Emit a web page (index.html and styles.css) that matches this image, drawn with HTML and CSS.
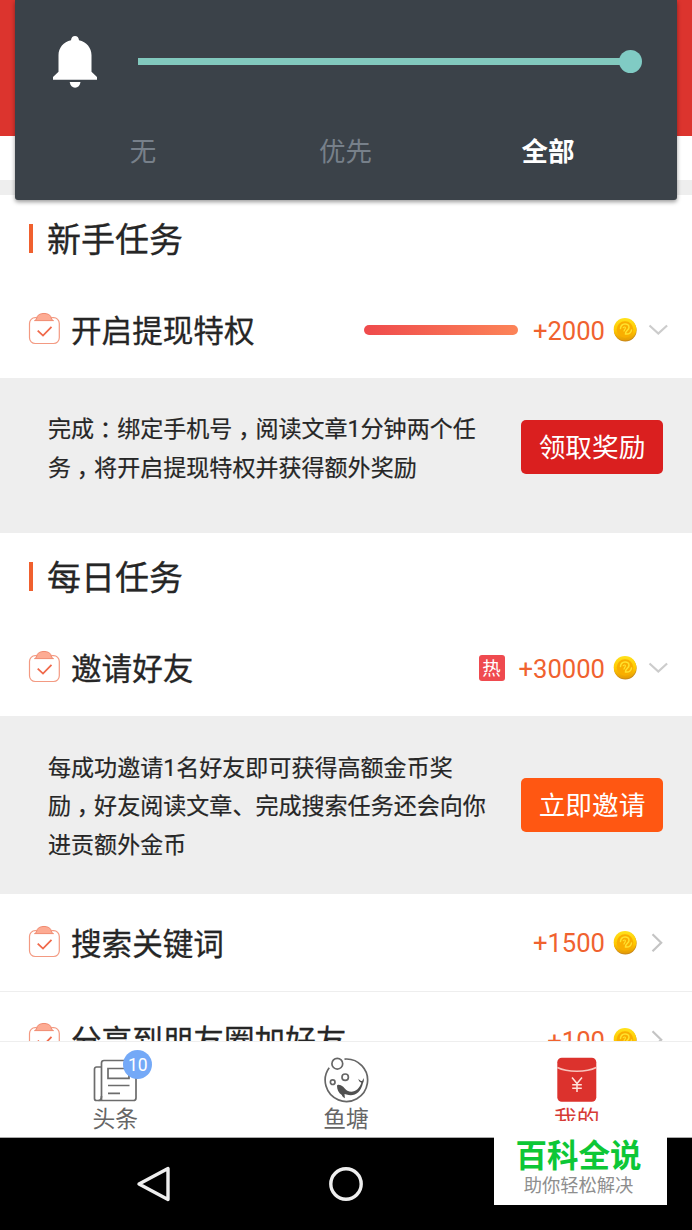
FILE: index.html
```html
<!DOCTYPE html>
<html lang="zh-CN">
<head>
<meta charset="utf-8">
<title>任务</title>
<link rel="stylesheet" href="styles.css">
</head>
<body>
<svg class="defs" width="0" height="0">
  <defs>
    <linearGradient id="gold" x1="0" y1="0" x2="0" y2="1">
      <stop offset="0" stop-color="#ffe21c"/><stop offset=".55" stop-color="#ffc800"/><stop offset="1" stop-color="#e59a05"/>
    </linearGradient>
    <symbol id="task" viewBox="0 0 32 34">
      <path d="M6.500 9.600C8.300 9.200 8.500 7.600 9.200 5.600 11 1.400 21 1.400 22.800 5.600c.7 2 .9 3.600 2.700 4z" fill="#fdab93" stroke="#f08a70"/>
      <path d="M9.300 6.700H7.200a5.700 5.700 0 0 0-5.700 5.700v14.400a5.700 5.700 0 0 0 5.700 5.700h18.400a5.700 5.700 0 0 0 5.700-5.700V12.400a5.700 5.700 0 0 0-5.700-5.700h-2.900" fill="none" stroke="#f39a82" stroke-width="1.200"/>
      <path d="M9.700 19.600l5.300 5 8.500-8.700" fill="none" stroke="#f0694a" stroke-width="1.800"/>
    </symbol>
    <symbol id="coin" viewBox="0 0 24 26">
      <circle cx="12.300" cy="13.300" r="11.300" fill="#c98a1a"/>
      <circle cx="12" cy="12.300" r="11.300" fill="url(#gold)"/>
      <circle cx="12" cy="12.500" r="8.300" fill="#f9ae00"/>
      <path d="M7.500 11.500c.3-5.800 8.500-6 8.500-1.300 0 3.300-4 3.600-3.500 6.800 3 .4 5.500-1 6-4" fill="none" stroke="#ffe22e" stroke-width="1.500" stroke-linecap="round"/>
      <path d="M10 11.200c.4-1.600 2.400-1.700 2.400-.2 0 1.400-1.500 2-1.500 3.600" fill="none" stroke="#ffe22e" stroke-width="1.100"/>
    </symbol>
    <symbol id="down" viewBox="0 0 20 20"><path d="M1.500 5.500l8.800 8 8.800-8" fill="none" stroke="#ccc" stroke-width="2.200"/></symbol>
    <symbol id="right" viewBox="0 0 20 20"><path d="M4.500 1.300l8.700 8.500-8.700 8.500" fill="none" stroke="#c4c4c4" stroke-width="2.200"/></symbol>
  </defs>
</svg>
<div class="phone">
  <main class="page">
    <header class="banner"></header>
    <div class="divider"></div>

    <h2 class="heading">新手任务</h2>
    <div class="row">
      <svg class="task"><use href="#task"/></svg>
      <span class="name">开启提现特权</span>
      <span class="progress"></span>
      <span class="points">+2000</span>
      <svg class="coin"><use href="#coin"/></svg>
      <svg class="arrow"><use href="#down"/></svg>
    </div>
    <section class="detail detail-tall">
      <p>完成<span class="mark">：</span>绑定手机号<span class="mark">，</span>阅读文章1分钟两个任<br>务<span class="mark">，</span>将开启提现特权并获得额外奖励</p>
      <button class="btn btn-red">领取奖励</button>
    </section>

    <h2 class="heading">每日任务</h2>
    <div class="row">
      <svg class="task"><use href="#task"/></svg>
      <span class="name">邀请好友</span>
      <span class="hot">热</span>
      <span class="points">+30000</span>
      <svg class="coin"><use href="#coin"/></svg>
      <svg class="arrow"><use href="#down"/></svg>
    </div>
    <section class="detail">
      <p>每成功邀请1名好友即可获得高额金币奖<br>励<span class="mark">，</span>好友阅读文章、完成搜索任务还会向你<br>进贡额外金币</p>
      <button class="btn btn-orange">立即邀请</button>
    </section>
    <div class="row row-line">
      <svg class="task"><use href="#task"/></svg>
      <span class="name">搜索关键词</span>
      <span class="points">+1500</span>
      <svg class="coin"><use href="#coin"/></svg>
      <svg class="arrow"><use href="#right"/></svg>
    </div>
    <div class="row">
      <svg class="task"><use href="#task"/></svg>
      <span class="name">分享到朋友圈加好友</span>
      <span class="points">+100</span>
      <svg class="coin"><use href="#coin"/></svg>
      <svg class="arrow"><use href="#right"/></svg>
    </div>
  </main>

  <nav class="tabs">
    <div class="tab">
      <div class="tab-icon">
        <svg width="46" height="46" viewBox="0 0 46 46" fill="none" stroke="#6c6c6c" stroke-width="1.700">
          <path d="M9.500 43.500V6A2.500 2.500 0 0 1 12 3.500h29.500A2.500 2.500 0 0 1 44 6v35a2.500 2.500 0 0 1-2.500 2.500H4.500a2 2 0 0 1-2-2V12a2 2 0 0 1 2-2h5"/>
          <path d="M9.500 39c0 3-1 4.500-3 4.500M16 11.500h21v9.800H16zM16 28.500h21.500M16 36.300h12"/>
        </svg>
        <span class="count">10</span>
      </div>
      <span>头条</span>
    </div>
    <div class="tab">
      <div class="tab-icon">
        <svg width="46" height="46" viewBox="0 0 46 46" fill="none" stroke="#666" stroke-width="1.700">
          <path d="M21.500 2.100A21.200 21.200 0 1 1 6.200 10.800"/>
          <circle cx="14.300" cy="6.700" r="5.400"/><circle cx="22.200" cy="20.200" r="3.200"/><circle cx="9.700" cy="25.200" r="2.300"/>
          <path d="M14 29c0-2 3.500-1.800 6.200.8 1.600 1.600 2.600 3 4.200 4 6 3 12-1.500 14-8-2-.8-2.800-2-3-4 1.300 1.700 2.400 2.300 3.600 2.300.8-.8 1.100-1.600 1.200-3 1 1.700.8 3.300-.2 4.900C37.700 36 31 40 23.500 37.500l-2-.4.4 4.100c-1.800-.8-2.700-1.800-3.100-3.100C15.500 36 14 32.500 14 29z" fill="#505050" stroke="none"/>
        </svg>
      </div>
      <span>鱼塘</span>
    </div>
    <div class="tab tab-on">
      <div class="tab-icon">
        <svg width="46" height="46" viewBox="0 0 46 46">
          <rect x="3.300" y=".8" width="39" height="44" rx="4.500" fill="#dc322d"/>
          <path d="M3.300 10.500c10 5 29 5 39 0" fill="none" stroke="#f8c4bd" stroke-width="1.500"/>
          <path d="M18 20.500l5 6 5-6M23 26.500V35M18.200 27.700h9.600M18.200 31.300h9.600" fill="none" stroke="#ffe3dc" stroke-width="1.500"/>
        </svg>
      </div>
      <span>我的</span>
    </div>
  </nav>

  <div class="system">
    <svg width="36" height="40" viewBox="0 0 36 40"><path d="M32 4.500v31L3 20z" fill="none" stroke="#eee" stroke-width="3.400" stroke-linejoin="round"/></svg>
    <svg width="36" height="40" viewBox="0 0 36 40"><circle cx="18" cy="20" r="15.200" fill="none" stroke="#eee" stroke-width="3.400"/></svg>
    <span></span>
  </div>

  <aside class="volume">
    <div class="slider">
      <svg width="46" height="54" viewBox="0 0 46 54" fill="#fff">
        <path d="M23 1c2.200 0 3.800 1.500 4 4.200 7.500 1.700 12.500 7.500 12.500 15v16.500l5.500 5.300v2.700H1V42l5.500-5.300V20.200c0-7.500 5-13.300 12.500-15C19.200 2.500 20.800 1 23 1z"/>
        <path d="M17.700 47h10.800c-.5 3.600-2.600 5.700-5.400 5.700s-4.900-2.100-5.400-5.700z"/>
      </svg>
      <div class="track"><i></i></div>
    </div>
    <div class="modes"><span>无</span><span>优先</span><b>全部</b></div>
  </aside>

  <aside class="watermark">
    <strong>百科全说</strong>
    <span>助你轻松解决</span>
  </aside>
</div>
</body>
</html>
```

FILE: styles.css
```css
* { box-sizing: border-box; }
body {
  margin: 0;
  color: #262626;
  font-family: Roboto, "Noto Sans CJK SC", sans-serif;
}
.defs { position: absolute; }
.phone {
  position: relative;
  display: flex;
  flex-direction: column;
  width: 692px;
  height: 1230px;
  overflow: hidden;
  background: #fff;
}
.page { height: 1041px; flex: none; overflow: hidden; }
.banner { height: 136px; background: #dc342e; }
.divider { height: 15px; margin-top: 44px; background: #eee; }

.heading {
  display: flex;
  align-items: center;
  gap: 14px;
  height: 87px;
  margin: 0;
  padding: 3px 0 0 29px;
  font-size: 34px;
  font-weight: 400;
  line-height: 40px;
  -webkit-text-stroke: .3px;
}
.heading::before { content: ""; width: 4px; height: 29px; margin-bottom: 3px; background: #f0602e; }

.row {
  display: flex;
  align-items: center;
  height: 96px;
  padding: 0 24px 0 28px;
}
.row-line { height: 98px; border-bottom: 1px solid #eee; }
.task { width: 32px; height: 34px; margin-right: 11px; margin-top: -4px; }
.name {
  margin-right: auto;
  padding-top: 4px;
  font-size: 30.6px;
  line-height: 40px;
  -webkit-text-stroke: .3px;
}
.progress {
  width: 154px;
  height: 10px;
  margin-right: 15px;
  border-radius: 5px;
  background: linear-gradient(90deg, #ef4a4c, #fc8458);
}
.hot {
  width: 26px;
  height: 26px;
  margin-right: 14px;
  border-radius: 3px;
  background: #ef4a4f;
  color: #fff;
  font-size: 18.5px;
  line-height: 28px;
  text-align: center;
}
.points { padding-top: 1px; color: #f0622f; font-size: 25.6px; line-height: 30px; }
.coin { width: 24px; height: 26px; margin: 0 11px 0 8px; }
.arrow { width: 20px; height: 20px; }

.detail {
  display: flex;
  align-items: center;
  justify-content: space-between;
  height: 178px;
  padding: 0 29px 0 48px;
  background: #eee;
}
.detail-tall { height: 155px; padding-bottom: 17px; }
.detail p {
  margin: 0;
  padding-top: 5px;
  font-size: 23.05px;
  line-height: 38.4px;
  white-space: nowrap;
  -webkit-text-stroke: .2px;
}
.mark { padding: 0 .25em; font-feature-settings: "halt"; }
.btn {
  width: 142px;
  height: 54px;
  padding: 3px 0 0;
  border: 0;
  border-radius: 5px;
  color: #fff;
  font: 26.7px/51px Roboto, "Noto Sans CJK SC", sans-serif;
}
.btn-red { background: #da1f1f; }
.btn-orange { background: #ff5712; }

.tabs {
  display: flex;
  flex: none;
  height: 97px;
  padding-top: 15px;
  border-top: 1px solid #eee;
  border-bottom: 1px solid #aaa;
  color: #666;
  font-size: 22.8px;
  line-height: 34px;
}
.tab { display: flex; flex: 1; flex-direction: column; align-items: center; }
.tab-icon { position: relative; height: 46px; }
.tab-icon svg { display: block; }
.tab-on { color: #d63a35; }
.count {
  position: absolute;
  top: -7px;
  left: 31px;
  width: 29px;
  height: 29px;
  border-radius: 50%;
  background: #74a9f7;
  color: #fff;
  font-size: 17.5px;
  line-height: 30px;
  text-align: center;
}

.system {
  display: grid;
  grid-template-columns: repeat(3, 192px);
  flex: 1;
  justify-content: center;
  justify-items: center;
  align-items: center;
  background: #000;
}

.volume {
  position: absolute;
  top: 0;
  left: 15px;
  width: 662px;
  height: 200px;
  border-radius: 0 0 3px 3px;
  background: #3b4249;
  box-shadow: 0 2px 4px rgba(0, 0, 0, .4);
}
.slider {
  display: flex;
  align-items: center;
  gap: 40px;
  height: 123px;
  padding: 0 35px 0 37px;
}
.track {
  display: flex;
  flex: 1;
  align-items: center;
  justify-content: flex-end;
  height: 7px;
  background: linear-gradient(90deg, #82c9be 97%, transparent 97%);
}
.track i { width: 23px; height: 23px; border-radius: 50%; background: #80cbc4; }
.modes {
  display: grid;
  grid-template-columns: repeat(3, 202.500px);
  justify-content: center;
  padding: 9px 1px 0 0;
  color: #77808a;
  font-size: 26.5px;
  line-height: 40px;
  text-align: center;
}
.modes b { color: #fff; }

.watermark {
  position: absolute;
  top: 1121px;
  left: 494px;
  display: flex;
  flex-direction: column;
  align-items: center;
  width: 173px;
  height: 84px;
  padding-top: 17px;
  padding-right: 4px;
  background: #fff;
}
.watermark strong { color: #0dc736; font-size: 31.5px; line-height: 37px; }
.watermark span { color: #8e8e8e; font-size: 18.3px; line-height: 22px; }
```
